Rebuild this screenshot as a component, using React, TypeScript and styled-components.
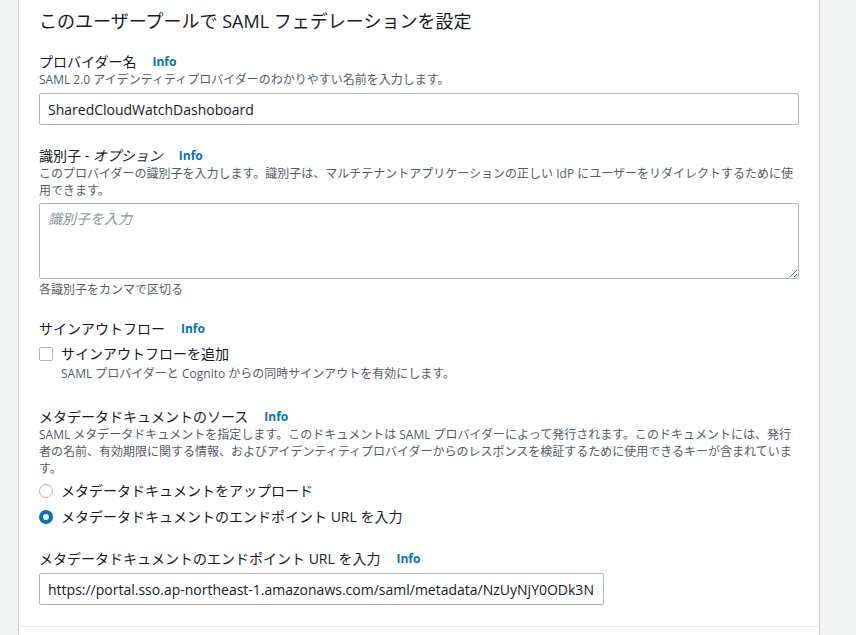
import React from "react";
import styled, { createGlobalStyle } from "styled-components";

const GlobalStyle = createGlobalStyle`
  html, body {
    margin: 0;
    padding: 0;
    background: #f2f3f3;
    font-family: "Open Sans", "Noto Sans CJK JP", sans-serif;
    color: #16191f;
  }
`;

const Page = styled.div`
  display: flex;
  height: 635px;
  overflow: hidden;
  padding-left: 18px;
  padding-right: 36px;
`;

const Panel = styled.section`
  flex: 1;
  background: #ffffff;
  border-left: 1px solid #c7cdd0;
  border-right: 1px solid #c7cdd0;
  display: flex;
  flex-direction: column;
`;

const Body = styled.div`
  padding: 10px 20px 21px 20px;
  display: flex;
  flex-direction: column;
`;

const Title = styled.h2`
  margin: 0 0 21px 0;
  font-size: 18px;
  line-height: 22px;
  font-weight: 400;
`;

const Fields = styled.div`
  display: flex;
  flex-direction: column;
  gap: 22px;
`;

const Field = styled.div`
  display: flex;
  flex-direction: column;
`;

const Label = styled.div`
  display: flex;
  align-items: center;
  font-size: 14px;
  line-height: 18px;
`;

const Italic = styled.span`
  font-style: italic;
`;

const InfoLink = styled.a`
  margin-left: 16px;
  font-size: 12px;
  font-weight: 700;
  color: #0073bb;
  text-decoration: none;
`;

const Description = styled.div<{ $indent?: boolean }>`
  font-size: 12px;
  line-height: 17px;
  color: #545b64;
  padding-left: ${(p) => (p.$indent ? "22px" : "0")};
`;

const Constraint = styled.div`
  margin-top: 3px;
  font-size: 12px;
  line-height: 16px;
  color: #545b64;
`;

const TextInput = styled.input<{ $width?: string }>`
  box-sizing: border-box;
  margin-top: 5px;
  width: ${(p) => p.$width || "100%"};
  height: 32px;
  padding: 0 8px;
  border: 1px solid #aab7b8;
  border-radius: 2px;
  font-family: "Open Sans", "Noto Sans CJK JP", sans-serif;
  font-size: 14px;
  color: #16191f;
  background: #fff;
  outline: none;
`;

const TextArea = styled.textarea`
  box-sizing: border-box;
  margin-top: 4px;
  width: 100%;
  height: 76px;
  padding: 4px 8px;
  border: 1px solid #aab7b8;
  border-radius: 2px;
  font-family: "Open Sans", "Noto Sans CJK JP", sans-serif;
  font-size: 14px;
  line-height: 22px;
  color: #16191f;
  outline: none;
  &::placeholder {
    color: #879596;
    font-style: italic;
  }
`;

const OptionRow = styled.label`
  display: flex;
  align-items: center;
  gap: 8px;
  font-size: 14px;
  line-height: 22px;
`;

const CheckBox = styled.span`
  box-sizing: border-box;
  width: 14px;
  height: 14px;
  border: 1px solid #aab7b8;
  border-radius: 2px;
  background: #fff;
`;

const Radio = styled.span<{ $checked?: boolean }>`
  box-sizing: border-box;
  width: 14px;
  height: 14px;
  border-radius: 50%;
  background: #fff;
  border: ${(p) => (p.$checked ? "4px solid #0073bb" : "1px solid #aab7b8")};
`;

const OptionGroup = styled.div`
  display: flex;
  flex-direction: column;
  gap: 4px;
  margin-top: 3px;
`;

const CheckGroup = styled.div`
  display: flex;
  flex-direction: column;
  margin-top: 5px;
  padding-bottom: 4px;
`;

const Divider = styled.hr`
  margin: 0;
  border: 0;
  border-top: 1px solid #eaeded;
`;

function Info() {
  return <InfoLink href="#">Info</InfoLink>;
}

export default function App() {
  return (
    <>
      <GlobalStyle />
      <Page>
        <Panel>
          <Body>
            <Title>このユーザープールで SAML フェデレーションを設定</Title>
            <Fields>
              <Field>
                <Label>
                  プロバイダー名
                  <Info />
                </Label>
                <Description>
                  SAML 2.0 アイデンティティプロバイダーのわかりやすい名前を入力します。
                </Description>
                <TextInput defaultValue="SharedCloudWatchDashoboard" />
              </Field>

              <Field>
                <Label>
                  識別子 -&nbsp;<Italic>オプション</Italic>
                  <Info />
                </Label>
                <Description>
                  このプロバイダーの識別子を入力します。識別子は、マルチテナントアプリケーションの正しい IdP
                  にユーザーをリダイレクトするために使用できます。
                </Description>
                <TextArea placeholder="識別子を入力" />
                <Constraint>各識別子をカンマで区切る</Constraint>
              </Field>

              <Field>
                <Label>
                  サインアウトフロー
                  <Info />
                </Label>
                <CheckGroup>
                  <OptionRow>
                    <CheckBox />
                    サインアウトフローを追加
                  </OptionRow>
                  <Description $indent>
                    SAML プロバイダーと Cognito からの同時サインアウトを有効にします。
                  </Description>
                </CheckGroup>
              </Field>

              <Field>
                <Label>
                  メタデータドキュメントのソース
                  <Info />
                </Label>
                <Description>
                  SAML メタデータドキュメントを指定します。このドキュメントは SAML
                  プロバイダーによって発行されます。このドキュメントには、発行者の名前、有効期限に関する情報、およびアイデンティティプロバイダーからのレスポンスを検証するために使用できるキーが含まれています。
                </Description>
                <OptionGroup>
                  <OptionRow>
                    <Radio />
                    メタデータドキュメントをアップロード
                  </OptionRow>
                  <OptionRow>
                    <Radio $checked />
                    メタデータドキュメントのエンドポイント URL を入力
                  </OptionRow>
                </OptionGroup>
              </Field>

              <Field>
                <Label>
                  メタデータドキュメントのエンドポイント URL を入力
                  <Info />
                </Label>
                <TextInput
                  $width="565px"
                  defaultValue="https://portal.sso.ap-northeast-1.amazonaws.com/saml/metadata/NzUyNjY0ODk3NDYxX2lucy0xMjM0"
                />
              </Field>
            </Fields>
          </Body>
          <Divider />
        </Panel>
      </Page>
    </>
  );
}
